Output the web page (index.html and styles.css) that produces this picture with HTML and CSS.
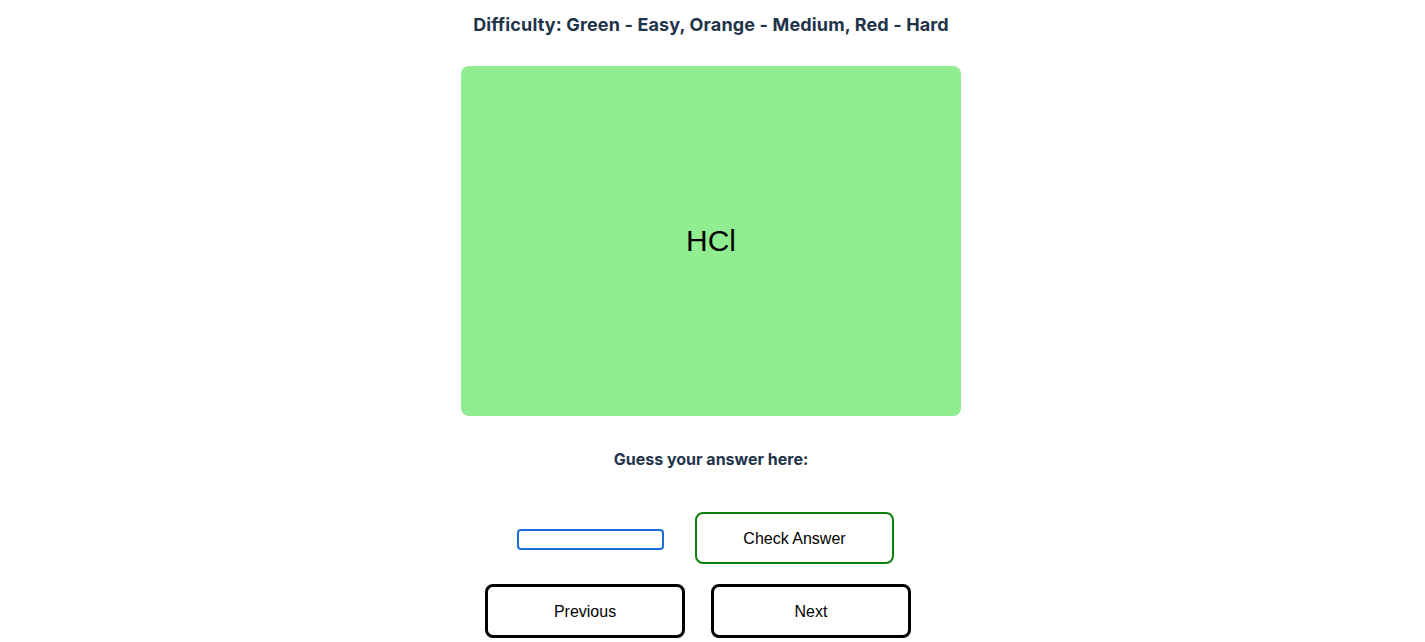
FILE: index.html
```html
<!DOCTYPE html>
<html>
<head>
<meta charset="utf-8">
<link rel="stylesheet" href="styles.css">
</head>
<body>
<div class="page">
  <h1 class="title">Difficulty: Green - Easy, Orange - Medium, Red - Hard</h1>
  <div class="card"><span class="term">HCl</span></div>
  <p class="prompt">Guess your answer here:</p>
  <div class="row row-check">
    <input class="answer" type="text">
    <button class="btn btn-check">Check Answer</button>
  </div>
  <div class="row row-nav">
    <button class="btn btn-nav">Previous</button>
    <button class="btn btn-nav">Next</button>
  </div>
</div>
</body>
</html>
```

FILE: styles.css
```css
html, body {
  margin: 0;
  padding: 0;
  background: #ffffff;
}
.page {
  display: flex;
  flex-direction: column;
  align-items: center;
  padding-right: 3px;
  font-family: Inter, "Liberation Sans", sans-serif;
}
.title {
  margin: 14px 0 0 0;
  font-size: 18px;
  line-height: 22px;
  letter-spacing: 0.14px;
  font-weight: 700;
  color: #1f344a;
}
.card {
  margin-top: 30px;
  width: 500px;
  height: 350px;
  background: #90ee90;
  border-radius: 8px;
  display: flex;
  align-items: center;
  justify-content: center;
}
.term {
  font-family: "Liberation Sans", Arial, sans-serif;
  font-size: 30px;
  color: #000;
}
.prompt {
  margin: 33px 0 0 0;
  font-size: 16px;
  line-height: 20px;
  font-weight: 700;
  color: #1f344a;
}
.row {
  display: flex;
  align-items: center;
}
.row-check {
  margin-top: 43px;
}
.row-nav {
  margin-top: 20px;
}
.answer {
  box-sizing: border-box;
  width: 147px;
  height: 21px;
  margin: 2px 31px 0 15px;
  border: 2px solid #1a6fd9;
  border-radius: 4px;
  outline: none;
  padding: 0 4px;
  background: #fff;
}
.btn {
  box-sizing: border-box;
  font-family: "Liberation Sans", Arial, sans-serif;
  font-size: 16px;
  color: #000;
  background: #fff;
  border-radius: 8px;
  margin-right: 26px;
  padding: 2px 0 0 0;
  cursor: pointer;
}
.btn-check {
  width: 199px;
  height: 52px;
  border: 2px solid #0b800b;
}
.btn-nav {
  width: 200px;
  height: 54px;
  border: 3px solid #000;
}
```
